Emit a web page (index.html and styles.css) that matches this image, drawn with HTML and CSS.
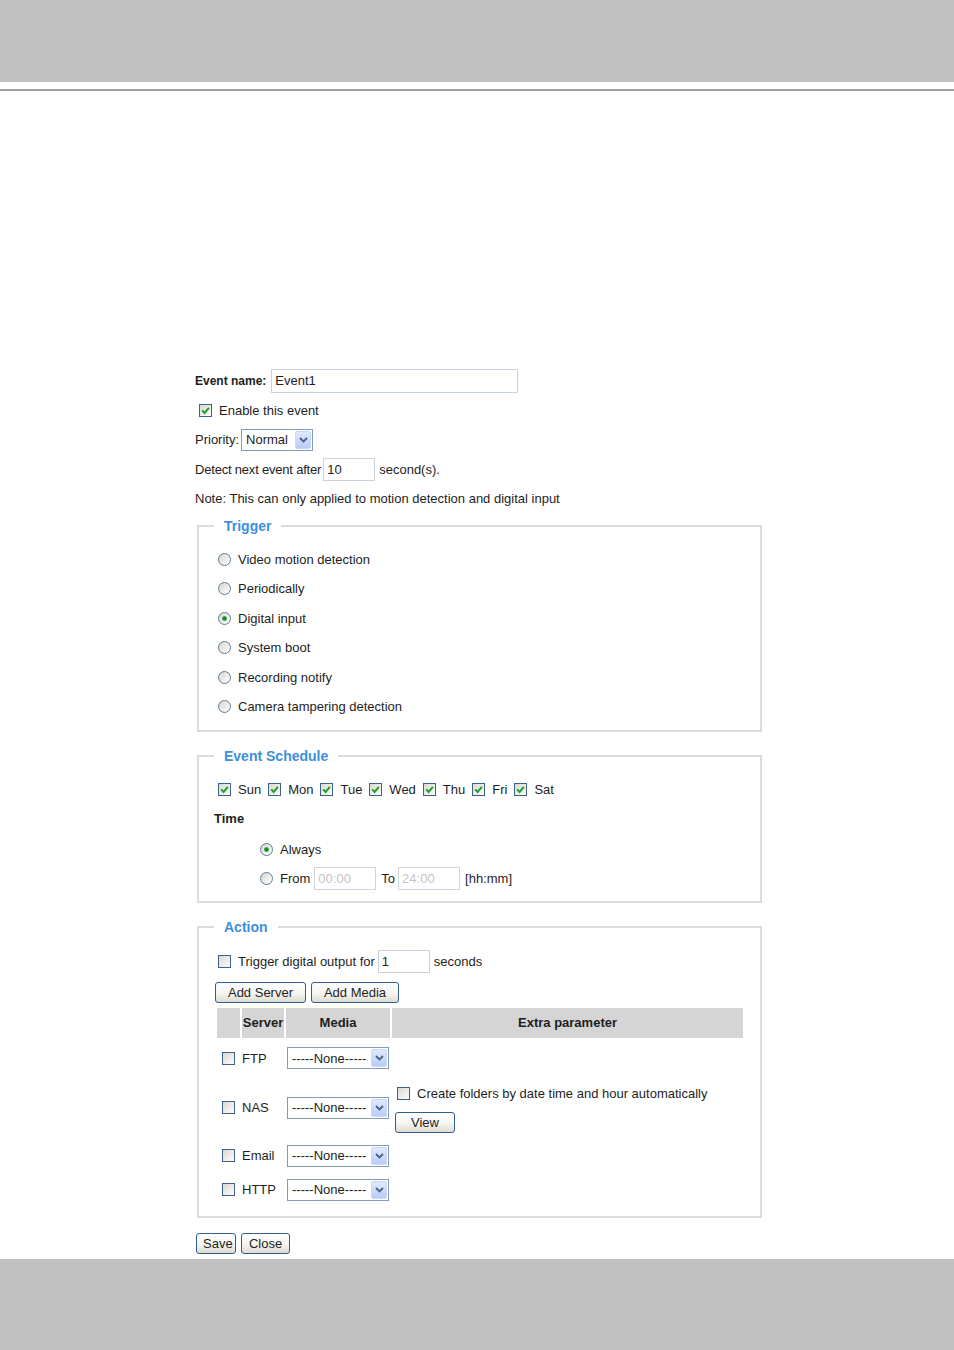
FILE: index.html
```html
<!DOCTYPE html>
<html lang="en">
<head>
    <meta charset="UTF-8">
    <meta name="viewport" content="width=device-width, initial-scale=1.0">
    <title>Event Setting</title>
    <link rel="stylesheet" href="styles.css">
</head>
<body>
    <svg class="defs" aria-hidden="true">
        <symbol id="tick" viewBox="0 0 11 11"><path d="M2.2 5.4l2.4 2.5 4.3-5" fill="none" stroke="#21a121" stroke-width="2"/></symbol>
        <symbol id="chev" viewBox="0 0 9 6"><path d="M1 1l3.5 3.5L8 1" fill="none" stroke="#4d6185" stroke-width="1.8"/></symbol>
    </svg>

    <div class="top-bar"></div>
    <div class="top-rule"></div>

    <main class="page">
        <form class="event-form">
            <div class="row">
                <label class="strong name-label" for="eventName">Event name:</label>
                <input type="text" id="eventName" class="text name" value="Event1">
            </div>
            <div class="row">
                <span class="cb"><svg class="tick"><use href="#tick"/></svg></span>Enable this event
            </div>
            <div class="row">
                Priority:
                <span class="select priority"><span class="val">Normal</span><span class="arrow"><svg class="chev"><use href="#chev"/></svg></span></span>
            </div>
            <div class="row">
                <span class="tight">Detect next event after</span>
                <input type="text" class="text delay" value="10">
                second(s).
            </div>
            <div class="row">Note: This can only applied to motion detection and digital input</div>

            <fieldset class="group first">
                <legend>Trigger</legend>
                <div class="row"><span class="rb"></span>Video motion detection</div>
                <div class="row"><span class="rb"></span>Periodically</div>
                <div class="row"><span class="rb on"></span>Digital input</div>
                <div class="row"><span class="rb"></span>System boot</div>
                <div class="row"><span class="rb"></span>Recording notify</div>
                <div class="row"><span class="rb"></span>Camera tampering detection</div>
            </fieldset>

            <fieldset class="group schedule">
                <legend>Event Schedule</legend>
                <div class="row">
                    <span class="day"><span class="cb"><svg class="tick"><use href="#tick"/></svg></span>Sun</span>
                    <span class="day"><span class="cb"><svg class="tick"><use href="#tick"/></svg></span>Mon</span>
                    <span class="day"><span class="cb"><svg class="tick"><use href="#tick"/></svg></span>Tue</span>
                    <span class="day"><span class="cb"><svg class="tick"><use href="#tick"/></svg></span>Wed</span>
                    <span class="day"><span class="cb"><svg class="tick"><use href="#tick"/></svg></span>Thu</span>
                    <span class="day"><span class="cb"><svg class="tick"><use href="#tick"/></svg></span>Fri</span>
                    <span class="day"><span class="cb"><svg class="tick"><use href="#tick"/></svg></span>Sat</span>
                </div>
                <div class="row strong">Time</div>
                <div class="row sub always"><span class="rb on"></span>Always</div>
                <div class="row sub from">
                    <span class="rb"></span>From
                    <input type="text" class="text time" value="00:00" disabled>
                    To
                    <input type="text" class="text time to" value="24:00" disabled>
                    [hh:mm]
                </div>
            </fieldset>

            <fieldset class="group action">
                <legend>Action</legend>
                <div class="row">
                    <span class="cb"></span>Trigger digital output for
                    <input type="text" class="text delay out" value="1">
                    seconds
                </div>
                <div class="btn-row">
                    <button type="button" class="btn add-server">Add Server</button>
                    <button type="button" class="btn add-media">Add Media</button>
                </div>

                <div class="servers">
                    <div class="th"></div>
                    <div class="th">Server</div>
                    <div class="th">Media</div>
                    <div class="th">Extra parameter</div>

                    <div class="td mid"><span class="cb"></span></div>
                    <div class="td">FTP</div>
                    <div class="td"><span class="select media"><span class="val">-----None-----</span><span class="arrow"><svg class="chev"><use href="#chev"/></svg></span></span></div>
                    <div class="td"></div>

                    <div class="td mid"><span class="cb"></span></div>
                    <div class="td">NAS</div>
                    <div class="td"><span class="select media"><span class="val">-----None-----</span><span class="arrow"><svg class="chev"><use href="#chev"/></svg></span></span></div>
                    <div class="td extra">
                        <div class="extra-line"><span class="cb"></span>Create folders by date time and hour automatically</div>
                        <button type="button" class="btn view">View</button>
                    </div>

                    <div class="td mid"><span class="cb"></span></div>
                    <div class="td">Email</div>
                    <div class="td"><span class="select media"><span class="val">-----None-----</span><span class="arrow"><svg class="chev"><use href="#chev"/></svg></span></span></div>
                    <div class="td"></div>

                    <div class="td mid"><span class="cb"></span></div>
                    <div class="td">HTTP</div>
                    <div class="td"><span class="select media"><span class="val">-----None-----</span><span class="arrow"><svg class="chev"><use href="#chev"/></svg></span></span></div>
                    <div class="td"></div>
                </div>
            </fieldset>

            <div class="save-row">
                <button type="button" class="btn save">Save</button>
                <button type="button" class="btn close">Close</button>
            </div>
        </form>
    </main>

    <div class="bottom-bar"></div>
</body>
</html>
```

FILE: styles.css
```css
* {
    box-sizing: border-box;
}
html, body {
    margin: 0;
}
body {
    font-family: "Liberation Sans", Arial, sans-serif;
    font-size: 13px;
    color: #1e1e1e;
    background: #fff;
    min-height: 1350px;
    display: flex;
    flex-direction: column;
}
.defs {
    display: none;
}
.top-bar {
    height: 82px;
    background: #bfc0bf;
}
.top-rule {
    height: 2px;
    margin-top: 7px;
    background: #a0a0a0;
}
.page {
    flex: 1;
    padding: 275px 0 0 195px;
}
.bottom-bar {
    height: 91px;
    background: #bfc0bf;
}
.event-form {
    width: 570px;
}
.row {
    display: flex;
    align-items: center;
    height: 29.5px;
    white-space: nowrap;
}
.strong {
    font-weight: bold;
}
.name-label {
    font-size: 12px;
}
.tight {
    letter-spacing: -0.2px;
}

/* inputs */
.text {
    height: 23px;
    border: 1px solid #c8d3de;
    padding: 0 3px;
    font: inherit;
    color: #1e1e1e;
    background: #fff;
}
.text.name {
    width: 247px;
    height: 24px;
    margin-left: 5px;
}
.text.delay {
    width: 52px;
    margin: 0 4px 0 2px;
}
.text.out {
    margin-left: 3px;
}
.text.time {
    width: 62px;
    margin: 0 5px 0 4px;
    color: #c4c4c4;
    border-color: #ccd6e0;
}
.text.time.to {
    margin-left: 3px;
}

/* checkbox and radio */
.cb {
    width: 13px;
    height: 13px;
    flex: none;
    display: inline-flex;
    align-items: center;
    justify-content: center;
    margin: 0 7px 0 4px;
    border: 1px solid #3d6189;
    background: linear-gradient(135deg, #dad9d3, #fbfbfa);
}
.tick {
    width: 11px;
    height: 11px;
}
.rb {
    width: 13px;
    height: 13px;
    flex: none;
    display: inline-flex;
    align-items: center;
    justify-content: center;
    margin: 0 7px 0 4px;
    border-radius: 50%;
    border: 1px solid #5f7c9a;
    background: linear-gradient(135deg, #d6d5cf, #fff);
}
.rb.on::after {
    content: "";
    width: 5px;
    height: 5px;
    border-radius: 50%;
    background: radial-gradient(circle, #1f7a27 20%, #45b54f 70%, #8ad48f);
}
.day {
    display: inline-flex;
    align-items: center;
    margin-right: 3px;
}
.sub {
    padding-left: 42px;
}
.always {
    height: 31px;
}
.from {
    height: 28.5px;
}

/* select boxes */
.select {
    display: inline-flex;
    align-items: center;
    height: 22px;
    padding: 1px;
    border: 1px solid #7f9db9;
    background: #fff;
}
.select .val {
    flex: 1;
    padding-left: 3px;
    white-space: nowrap;
}
.select .arrow {
    width: 16px;
    height: 18px;
    display: flex;
    align-items: center;
    justify-content: center;
    border: 1px solid #c9d8fb;
    border-radius: 2px;
    background: linear-gradient(#e0e9fd, #b8ccf8);
}
.chev {
    width: 9px;
    height: 6px;
}
.priority {
    width: 72px;
    margin-left: 2px;
}
.media {
    width: 102px;
    margin-left: 1px;
}

/* fieldsets */
.group {
    width: 565px;
    margin: 16px 0 0 2px;
    padding: 11px 15px 8px;
    border: 2px solid #dcdcd6;
}
.group.first {
    margin-top: 4px;
}
.group.action {
    padding: 12px 15px 11px;
}
.group legend {
    padding: 0 10px;
    font-size: 14px;
    line-height: 16px;
    font-weight: bold;
    color: #3d8fdd;
}

/* buttons */
.btn {
    height: 21px;
    padding: 0 6px;
    border: 1px solid #2f5f8e;
    border-radius: 3px;
    background: linear-gradient(#ffffff, #f5f4f0 55%, #dedbd1);
    font: inherit;
    color: #1e1e1e;
    cursor: pointer;
}
.btn-row {
    display: flex;
    align-items: center;
    gap: 5px;
    height: 31px;
    padding-left: 1px;
}
.add-server {
    width: 91px;
}
.add-media {
    width: 88px;
}
.view {
    width: 60px;
    margin-left: 3px;
}
.save {
    width: 40px;
}
.close {
    width: 49px;
}
.save-row {
    display: flex;
    gap: 5px;
    margin-top: 15px;
    padding-left: 1px;
}

/* server table */
.servers {
    display: grid;
    grid-template-columns: 23px 42px 104px 351px;
    grid-template-rows: 30px 41px 58px 38px 30px;
    column-gap: 2px;
    margin-left: 3px;
}
.th {
    display: flex;
    align-items: center;
    justify-content: center;
    background: #d5d5d5;
    font-weight: bold;
}
.td {
    display: flex;
    align-items: center;
    white-space: nowrap;
}
.td.mid {
    justify-content: center;
}
.td.mid .cb {
    margin: 0;
}
.td.extra {
    flex-direction: column;
    align-items: flex-start;
    justify-content: center;
    gap: 8px;
}
.extra-line {
    display: flex;
    align-items: center;
    height: 22px;
}
.extra-line .cb {
    margin-left: 5px;
}
```
